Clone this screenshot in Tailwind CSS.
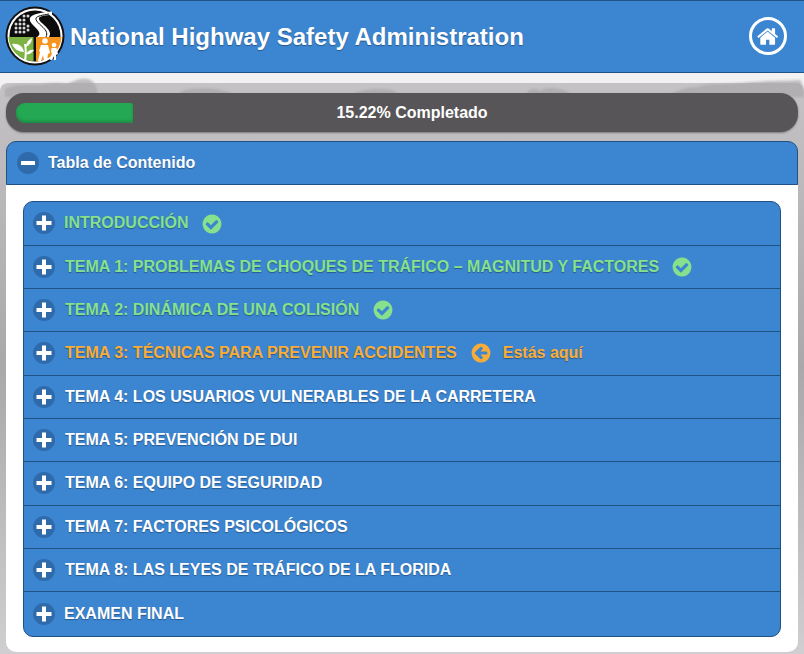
<!DOCTYPE html>
<html lang="es">
<head>
    <meta charset="UTF-8">
    <meta name="viewport" content="width=device-width, initial-scale=1.0">
    <title>Tabla de Contenido</title>
    <script src="https://cdn.jsdelivr.net/npm/@tailwindcss/browser@4"></script>
</head>
<body class="h-[654px] w-[804px] overflow-hidden bg-[#d9d7d9] font-['Liberation_Sans',Arial,sans-serif]">

<!-- Icons -->
<svg class="hidden">
    <symbol id="plus" viewBox="0 0 22 22">
        <circle cx="11" cy="11" r="11" fill="#2f6bab"/>
        <path d="M9 3.500h4V9h5.500v4H13v5.500H9V13H3.500V9H9z" fill="#fff"/>
    </symbol>
    <symbol id="check" viewBox="0 0 1792 1792">
        <path fill-rule="evenodd" d="M1412 734q0-28-18-46l-91-90q-19-19-45-19t-45 19l-408 407-226-226q-19-19-45-19t-45 19l-91 90q-18 18-18 46 0 27 18 45l362 362q19 19 45 19 27 0 46-19l543-543q18-18 18-45zm252 162q0 209-103 385.5t-279.5 279.5-385.5 103-385.5-103-279.5-279.5-103-385.5 103-385.5 279.5-279.5 385.5-103 385.5 103 279.5 279.5 103 385.5z"/>
    </symbol>
</svg>

<!-- Header -->
<header class="flex h-[73px] items-center justify-between border-y border-[#1f5283] bg-[#3c85d0] pl-[5px] pr-[17px]">
    <div class="flex items-center gap-[5px]">
        <svg class="mb-[2px] h-[60px] w-[60px]" viewBox="0 0 60 60">
            <circle cx="30" cy="30" r="29.500" fill="#111"/>
            <circle cx="30" cy="30" r="27.500" fill="#fff"/>
            <circle cx="30" cy="30" r="25.500" fill="#0c0c0c"/>
            <path d="M3.500 31h25v24.500C14 54 4.500 44 3.500 31z" fill="#7cb342"/>
            <path d="M31 31h25.500c-1 13-10.500 23-25.500 24.500z" fill="#f7941d"/>
            <path d="M47 5.500C38 6 27 8 25 12c-2 5 7 9 9 14 1 2 0 4-2 5h12c2-3 1-6-2-9-3-4-9-7-8-10 1-2 6-3 13-3z" fill="#fff"/>
            <path d="M44 8c-6 1-12 2-13 4-1 4 7 8 10 13 1 2 1 4 0 6" fill="none" stroke="#111" stroke-width="1"/>
            <g fill="#d8d8d8">
                <circle cx="11" cy="18" r="1.500"/><circle cx="15" cy="18" r="1.500"/><circle cx="19" cy="14" r="1.500"/><circle cx="23" cy="10" r="1.500"/>
                <circle cx="11" cy="22" r="1.500"/><circle cx="15" cy="14" r="1.500"/><circle cx="19" cy="18" r="1.500"/><circle cx="19" cy="10" r="1.500"/>
                <circle cx="15" cy="22" r="1.500"/><circle cx="19" cy="22" r="1.500"/><circle cx="15" cy="26" r="1.500"/><circle cx="19" cy="26" r="1.500"/>
                <circle cx="23" cy="24" r="1.500"/><circle cx="23" cy="20" r="1.500"/><circle cx="11" cy="26" r="1.500"/>
            </g>
            <path d="M19 55c1-7 1-12 0-17l2 0c1 6 1 11 0 17zM19 46c-5 0-10-3-12-8 6-1 11 2 12 8zM21 41c0-4 2-7 6-9 0 4-2 7-6 9zM21 48c2-4 6-5 8-4-2 3-5 5-8 4z" fill="#fff"/>
            <g fill="#fff">
                <circle cx="40" cy="35" r="2.800"/><path d="M36 39h7l2 8-2 1-1 7h-3l-1-6-2 6h-3l2-9-1-1z"/>
                <circle cx="49" cy="39" r="2.300"/><path d="M46.500 42h5l1.500 6-2 1v5h-2v-4l-2 4h-2l2-7-1-1z"/>
            </g>
        </svg>
        <h1 class="text-[24px] font-bold text-white [text-shadow:0_1px_1px_#27598c]">National Highway Safety Administration</h1>
    </div>
    <a href="#" class="mb-[1px] flex h-[38px] w-[38px] items-center justify-center rounded-full border-[3px] border-white">
        <svg class="h-[23px] w-[23px] fill-white" viewBox="0 0 1792 1792"><path d="M1408 992v480q0 26-19 45t-45 19h-384v-384h-256v384h-384q-26 0-45-19t-19-45v-480q0-1 .5-3t.5-3l575-474 575 474q1 2 1 6zm223-69l-62 74q-8 9-21 11h-3q-13 0-21-7l-692-577-692 577q-12 8-24 7-13-2-21-11l-62-74q-8-10-7-23.500t11-21.500l719-599q32-26 76-26t76 26l244 204v-195q0-14 9-23t23-9h192q14 0 23 9t9 23v408l219 182q10 8 11 21.500t-7 23.500z"/></svg>
    </a>
</header>

<!-- Content -->
<main class="relative bg-gradient-to-b from-[#f3f2f3] to-[#dedcde] pt-[10px]">
    <div class="rounded-t-[8px] bg-gradient-to-b from-[#c4c2c4] via-[#aaa8aa] to-[#d0ced0] px-[3px] pb-[2px] pt-[10px]">

        <!-- tree line of the page background -->
        <svg class="absolute left-0 top-[4px] h-[20px] w-[804px] blur-[1px]" viewBox="0 0 804 20">
            <g fill="#a9a7a9" fill-opacity="0.7">
                <path d="M5 12c6-4 20-5 34-4 8-2 18-3 28-1 8-3 12-6 20-5 6 1 8 5 10 10v8H5z"/>
                <path d="M178 20c2-6 8-8 14-8 14-2 26 0 36 3l8 5z"/>
                <path d="M350 20c6-6 18-8 30-8 8 0 16 0 20 8z"/>
                <path d="M528 14c4-3 10-3 12 0 4-3 12-4 18-2 4 0 10 2 14 8h-44z"/>
                <path d="M668 20c6-6 18-10 30-10 10-4 30-3 44-4 12-2 36-2 58-3 3 4 4 10 4 17z"/>
            </g>
        </svg>

        <!-- Progress -->
        <div class="relative mx-[3px] flex h-[39px] items-center rounded-[18px] bg-[#575557] pl-[10px] shadow-[0_1px_2px_#777]">
            <div class="h-[20px] w-[117px] rounded-l-[9px] rounded-r-[2px] bg-[#24a853] shadow-[inset_0_-2px_3px_#1b8a44]"></div>
            <span class="absolute inset-x-0 pl-[20px] text-center text-[16px] font-bold text-white">15.22% Completado</span>
        </div>

        <!-- Accordion -->
        <div class="mx-[3px] mt-[9px]">
            <div class="flex h-[44px] items-center gap-[9px] rounded-t-[10px] border border-[#1f5283] bg-[#3c85d0] pl-[10px]">
                <svg class="h-[22px] w-[22px]" viewBox="0 0 22 22">
                    <circle cx="11" cy="11" r="11" fill="#2f6bab"/>
                    <rect x="4" y="9" width="14" height="4" rx="0.500" fill="#fff"/>
                </svg>
                <span class="text-[16px] font-bold text-white [text-shadow:0_1px_1px_#27598c]">Tabla de Contenido</span>
            </div>

            <div class="rounded-b-[10px] bg-white px-[17px] pb-[15px] pt-[16px]">
                <ul class="overflow-hidden rounded-[10px] border border-[#1f5283] bg-[#3c85d0] text-[16px] font-bold text-white [text-shadow:0_1px_1px_#27598c]">
                    <li class="flex h-[43.500px] items-center border-b border-[#1f5283] pl-[9px]">
                        <svg class="h-[22px] w-[22px]"><use href="#plus"/></svg>
                        <span class="ml-[9px] text-[#86e08c]">INTRODUCCIÓN</span>
                        <svg class="ml-[13px] mt-[1px] h-[22px] w-[22px] fill-[#86e08c]"><use href="#check"/></svg>
                    </li>
                    <li class="flex h-[43.300px] items-center border-b border-[#1f5283] pl-[9px]">
                        <svg class="h-[22px] w-[22px]"><use href="#plus"/></svg>
                        <span class="ml-[10px] text-[#86e08c]">TEMA 1: PROBLEMAS DE CHOQUES DE TRÁFICO – MAGNITUD Y FACTORES</span>
                        <svg class="ml-[12px] mt-[1px] h-[22px] w-[22px] fill-[#86e08c]"><use href="#check"/></svg>
                    </li>
                    <li class="flex h-[43.300px] items-center border-b border-[#1f5283] pl-[9px]">
                        <svg class="h-[22px] w-[22px]"><use href="#plus"/></svg>
                        <span class="ml-[10px] text-[#86e08c]">TEMA 2: DINÁMICA DE UNA COLISIÓN</span>
                        <svg class="ml-[13px] mt-[1px] h-[22px] w-[22px] fill-[#86e08c]"><use href="#check"/></svg>
                    </li>
                    <li class="flex h-[43.500px] items-center border-b border-[#1f5283] pl-[9px] text-[#f9ad36]">
                        <svg class="h-[22px] w-[22px]"><use href="#plus"/></svg>
                        <span class="ml-[10px]">TEMA 3: TÉCNICAS PARA PREVENIR ACCIDENTES</span>
                        <svg class="ml-[13px] h-[22px] w-[22px] fill-[#f9ad36]" viewBox="0 0 1792 1792"><path fill-rule="evenodd" d="M1408 960v-128q0-26-19-45t-45-19h-502l189-189q19-19 19-45t-19-45l-91-91q-18-18-45-18t-45 18l-362 362-91 91q-18 18-18 45t18 45l91 91 362 362q18 18 45 18t45-18l91-91q18-18 18-45t-18-45l-189-189h502q26 0 45-19t19-45zm256-64q0 209-103 385.500t-279.500 279.500-385.500 103-385.500-103-279.500-279.500-103-385.500 103-385.500 279.500-279.500 385.500-103 385.500 103 279.500 279.500 103 385.500z"/></svg>
                        <span class="ml-[11px]">Estás aquí</span>
                    </li>
                    <li class="flex h-[43.400px] items-center border-b border-[#1f5283] pl-[9px]">
                        <svg class="h-[22px] w-[22px]"><use href="#plus"/></svg>
                        <span class="ml-[10px]">TEMA 4: LOS USUARIOS VULNERABLES DE LA CARRETERA</span>
                    </li>
                    <li class="flex h-[43.300px] items-center border-b border-[#1f5283] pl-[9px]">
                        <svg class="h-[22px] w-[22px]"><use href="#plus"/></svg>
                        <span class="ml-[10px]">TEMA 5: PREVENCIÓN DE DUI</span>
                    </li>
                    <li class="flex h-[43.400px] items-center border-b border-[#1f5283] pl-[9px]">
                        <svg class="h-[22px] w-[22px]"><use href="#plus"/></svg>
                        <span class="ml-[10px]">TEMA 6: EQUIPO DE SEGURIDAD</span>
                    </li>
                    <li class="flex h-[43.400px] items-center border-b border-[#1f5283] pl-[9px]">
                        <svg class="h-[22px] w-[22px]"><use href="#plus"/></svg>
                        <span class="ml-[10px]">TEMA 7: FACTORES PSICOLÓGICOS</span>
                    </li>
                    <li class="flex h-[43.400px] items-center border-b border-[#1f5283] pl-[9px]">
                        <svg class="h-[22px] w-[22px]"><use href="#plus"/></svg>
                        <span class="ml-[10px]">TEMA 8: LAS LEYES DE TRÁFICO DE LA FLORIDA</span>
                    </li>
                    <li class="flex h-[43.500px] items-center pl-[9px]">
                        <svg class="h-[22px] w-[22px]"><use href="#plus"/></svg>
                        <span class="ml-[9px]">EXAMEN FINAL</span>
                    </li>
                </ul>
            </div>
        </div>
    </div>
</main>

</body>
</html>
